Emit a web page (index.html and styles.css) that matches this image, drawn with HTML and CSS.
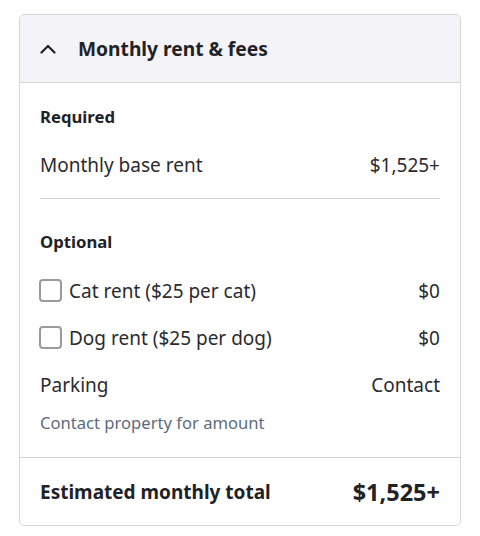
FILE: index.html
```html
<!DOCTYPE html>
<html>
<head>
<meta charset="utf-8">
<link rel="stylesheet" href="styles.css">
</head>
<body>
<div class="card">
  <div class="header">
    <svg class="chev" width="16" height="10" viewBox="0 0 16 10"><path d="M1.5 8.5 L8 2 L14.5 8.5" fill="none" stroke="#222" stroke-width="2.2" stroke-linecap="round" stroke-linejoin="round"/></svg>
    <span class="title">Monthly rent &amp; fees</span>
  </div>
  <div class="body">
    <div class="section-label first">Required</div>
    <div class="row base"><span>Monthly base rent</span><span>$1,525+</span></div>
    <div class="divider"></div>
    <div class="section-label">Optional</div>
    <div class="row check"><span class="lbl"><span class="box"></span>Cat rent ($25 per cat)</span><span>$0</span></div>
    <div class="row check"><span class="lbl"><span class="box"></span>Dog rent ($25 per dog)</span><span>$0</span></div>
    <div class="row check"><span>Parking</span><span>Contact</span></div>
    <div class="note">Contact property for amount</div>
  </div>
  <div class="footer"><span class="flabel">Estimated monthly total</span><span class="ftotal">$1,525+</span></div>
</div>
</body>
</html>
```
FILE: styles.css
```css
body {
  margin: 0;
  background: #fff;
  font-family: "Noto Sans", "Open Sans", sans-serif;
  color: #2b2b2e;
}
.card {
  margin: 14px 0 0 19px;
  width: 440px;
  border: 1px solid #d6d6da;
  border-radius: 5px;
  overflow: hidden;
}
.header {
  height: 67px;
  background: #f4f4f8;
  border-bottom: 1px solid #d6d6da;
  display: flex;
  align-items: center;
  padding-left: 20px;
}
.chev { margin-right: 22px; }
.title {
  font-size: 19.2px;
  font-weight: 700;
  color: #222226;
}
.body {
  padding: 0 20px;
}
.section-label {
  font-size: 16.7px;
  font-weight: 700;
  line-height: 24px;
  margin-top: 31px;
  color: #222226;
}
.section-label.first { margin-top: 22px; }
.row {
  display: flex;
  justify-content: space-between;
  align-items: center;
  font-size: 19px;
  line-height: 28px;
}
.row.base { margin-top: 22px; }
.divider {
  height: 1px;
  background: #d6d6da;
  margin-top: 19px;
}
.row.check { height: 47px; }
.section-label + .row.check { margin-top: 13px; }
.lbl { display: flex; align-items: center; }
.box {
  width: 23px;
  height: 23px;
  border: 2px solid #9a9a9e;
  border-radius: 4px;
  margin: 0 7px 0 -1px;
  box-sizing: border-box;
}
.note {
  font-size: 16.6px;
  line-height: 24px;
  color: #5c6b80;
  margin-top: 3px;
  padding-bottom: 22px;
}
.footer {
  border-top: 1px solid #d6d6da;
  height: 67px;
  display: flex;
  align-items: center;
  justify-content: space-between;
  padding: 0 20px;
}
.flabel { font-size: 19px; font-weight: 700; color: #222226; }
.ftotal { font-size: 23.5px; font-weight: 700; color: #222226; }
```
